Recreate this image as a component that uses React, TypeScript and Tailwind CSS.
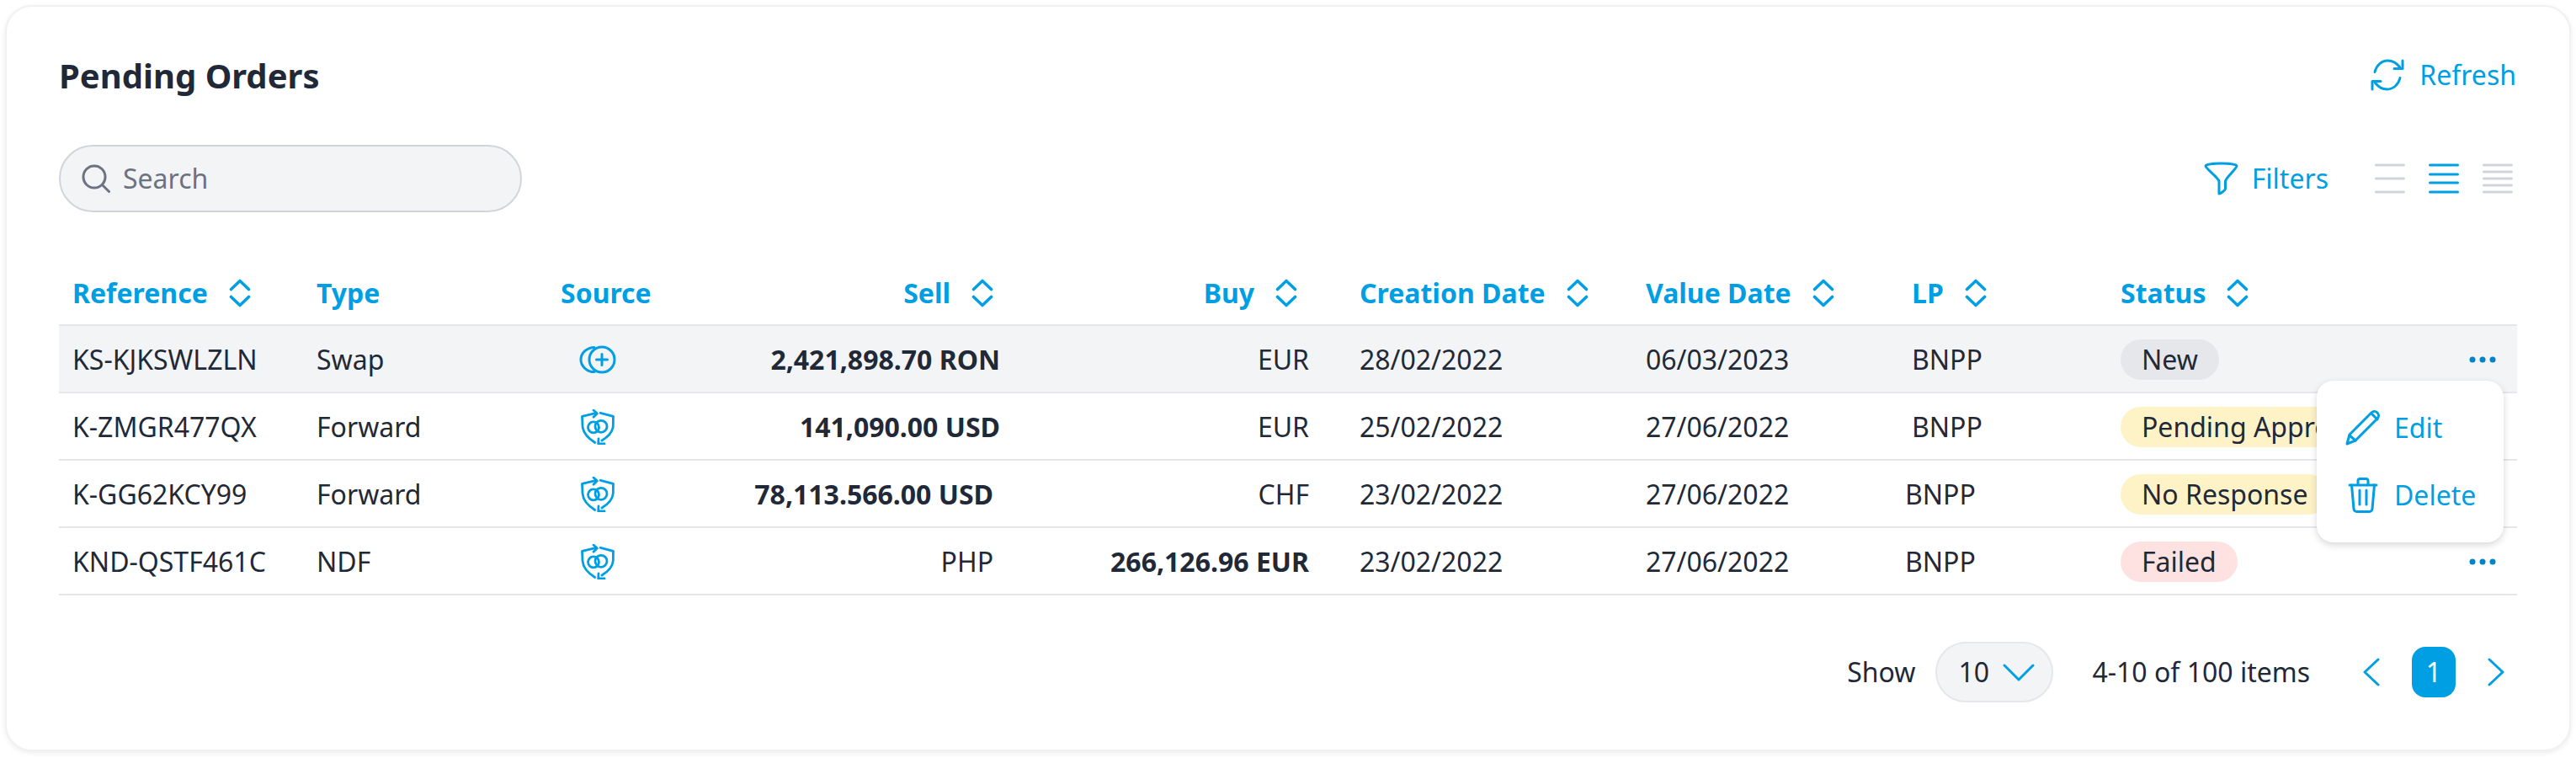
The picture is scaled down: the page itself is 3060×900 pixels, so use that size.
import { type ReactNode } from "react";

const rowGrid =
  "grid grid-cols-[290px_290px_120px_434px_367px_368px_316px_248px_487px] items-center";

function SortIcon() {
  return (
    <svg width="26" height="34" viewBox="0 0 26 34" fill="none" stroke="#009fe3" strokeWidth="3.6" strokeLinecap="round" strokeLinejoin="round">
      <path d="M2.5 12.5 13 2.5l10.500 10" />
      <path d="M2.5 21.5 13 31.5l10.500-10" />
    </svg>
  );
}

function CoinsPlusIcon() {
  return (
    <svg width="44" height="34" viewBox="0 0 44 34" fill="none" stroke="#009fe3" strokeWidth="3" strokeLinecap="round">
      <path d="M18 2.400C9.500 2.400 2 9 2 17s7.500 14.600 16 14.600" />
      <circle cx="27" cy="17" r="15" />
      <path d="M27 10.500v13M20.500 17h13" />
    </svg>
  );
}

function ShieldCycleIcon() {
  return (
    <svg width="40" height="42" viewBox="0 0 40 42" fill="none" stroke="#009fe3" strokeWidth="2.800" strokeLinecap="round" strokeLinejoin="round">
      <path d="M18.300 4.300 1.500 8.300 2 20c.5 7 6 14 14.700 19.500" />
      <path d="M15 1l4.300 4L15 9.300" />
      <path d="M23.300 4.300 38.500 8.300 38.300 20c-.5 6-5 12-13.300 17" />
      <path d="M21 35l-.3 6H28" />
      <circle cx="15" cy="21.300" r="6.500" />
      <circle cx="24" cy="20.300" r="7" />
    </svg>
  );
}

function Dots() {
  return (
    <svg width="32" height="8" viewBox="0 0 32 8" fill="#0284c7">
      <circle cx="4" cy="4" r="3.500" />
      <circle cx="16" cy="4" r="3.500" />
      <circle cx="28" cy="4" r="3.500" />
    </svg>
  );
}

function Pill({ color, children }: { color: string; children: ReactNode }) {
  return (
    <span className={`inline-flex h-12 items-center rounded-full px-[25px] whitespace-nowrap ${color}`}>
      {children}
    </span>
  );
}

function Head({ children, className = "" }: { children: ReactNode; className?: string }) {
  return (
    <div className={`flex items-center gap-[25px] ${className}`}>
      <span>{children}</span>
      <SortIcon />
    </div>
  );
}

const orders = [
  {
    ref: "KS-KJKSWLZLN",
    type: "Swap",
    icon: <CoinsPlusIcon />,
    sell: "2,421,898.70 RON",
    sellBold: true,
    buy: "EUR",
    buyBold: false,
    created: "28/02/2022",
    value: "06/03/2023",
    pill: <Pill color="bg-[#e5e7eb]">New</Pill>,
    bg: "bg-[#f3f4f6]",
    sellPad: "pr-[16px]",
    lpPad: "pl-[16px]",
  },
  {
    ref: "K-ZMGR477QX",
    type: "Forward",
    icon: <ShieldCycleIcon />,
    sell: "141,090.00 USD",
    sellBold: true,
    buy: "EUR",
    buyBold: false,
    created: "25/02/2022",
    value: "27/06/2022",
    pill: <Pill color="bg-[#fef3c7]">Pending Approval</Pill>,
    bg: "",
    sellPad: "pr-[16px]",
    lpPad: "pl-[16px]",
  },
  {
    ref: "K-GG62KCY99",
    type: "Forward",
    icon: <ShieldCycleIcon />,
    sell: "78,113.566.00 USD",
    sellBold: true,
    buy: "CHF",
    buyBold: false,
    created: "23/02/2022",
    value: "27/06/2022",
    pill: <Pill color="bg-[#fef3c7]">No Response</Pill>,
    bg: "",
    sellPad: "pr-[24px]",
    lpPad: "pl-[8px]",
  },
  {
    ref: "KND-QSTF461C",
    type: "NDF",
    icon: <ShieldCycleIcon />,
    sell: "PHP",
    sellBold: false,
    buy: "266,126.96 EUR",
    buyBold: true,
    created: "23/02/2022",
    value: "27/06/2022",
    pill: <Pill color="bg-[#fee2e2]">Failed</Pill>,
    bg: "",
    sellPad: "pr-[24px]",
    lpPad: "pl-[8px]",
  },
];

export default function App() {
  return (
    <div className="p-[6px] font-['Noto_Sans',sans-serif] text-[#1f2937] text-[32px] leading-[40px]">
      <div className="h-[886px] rounded-[32px] bg-white border-2 border-[#f0f1f3] shadow-[0_2px_6px_rgba(0,0,0,0.08)] px-[62px] pt-[54px]">
        {/* Title row */}
        <div className="flex items-center justify-between h-[56px]">
          <h1 className="text-[40px] font-bold">Pending Orders</h1>
          <button className="flex items-center gap-[18px] text-[#009fe3] pr-[1px] -mt-[3px]">
            <svg width="40" height="38" viewBox="0 0 40 38" fill="none" stroke="#009fe3" strokeWidth="3" strokeLinecap="round" strokeLinejoin="round">
              <path d="M5 15.500C7 7.500 13 2 20.500 2c5.500 0 10 2.500 14 7.500" />
              <path d="M38 2v9.500H28" />
              <path d="M35 22.500C33 30.500 27 36 19.500 36c-5.500 0-10-2.500-14-7.500" />
              <path d="M2 36v-9.500h10" />
            </svg>
            Refresh
          </button>
        </div>

        {/* Toolbar */}
        <div className="flex items-center justify-between mt-[54px] h-[80px]">
          <div className="flex items-center gap-[15px] w-[550px] h-[80px] rounded-full bg-[#f3f4f6] border-2 border-[#d1d5db] pl-[25px] text-[#6b7280]">
            <svg width="34" height="34" viewBox="0 0 34 34" fill="none" stroke="#6b7280" strokeWidth="3" strokeLinecap="round">
              <circle cx="15" cy="15" r="13" />
              <path d="m24.500 24.500 8 8" />
            </svg>
            Search
          </div>
          <div className="flex items-center pr-[5px]">
            <button className="flex items-center gap-[16px] text-[#009fe3]">
              <svg width="41" height="40" viewBox="0 0 41 40" fill="none" stroke="#009fe3" strokeWidth="3" strokeLinecap="round" strokeLinejoin="round">
                <path d="M2 5c0-2 9-3 18.500-3S39 3 39 5c0 3-12 13-13.500 18v9c0 2-6 6-7.500 6V23C16 18 2 8 2 5Z" />
              </svg>
              Filters
            </button>
            <div className="flex items-center gap-[28px] ml-[55px]">
              <svg width="36" height="36" viewBox="0 0 36 36" stroke="#d1d5db" strokeWidth="3" strokeLinecap="round">
                <path d="M1.500 2h33M1.500 18h33M1.500 34h33" />
              </svg>
              <svg width="36" height="36" viewBox="0 0 36 36" stroke="#009fe3" strokeWidth="3" strokeLinecap="round">
                <path d="M1.500 2h33M1.500 13h33M1.500 23h33M1.500 34h33" />
              </svg>
              <svg width="36" height="36" viewBox="0 0 36 36" stroke="#d1d5db" strokeWidth="3" strokeLinecap="round">
                <path d="M1.500 2h33M1.500 10h33M1.500 18h33M1.500 26h33M1.500 34h33" />
              </svg>
            </div>
          </div>
        </div>

        {/* Table */}
        <div className="relative mt-[58px] w-[2920px]">
          <div className={`${rowGrid} h-[77px] border-b-2 border-[#e5e7eb] font-bold text-[#009fe3]`}>
            <Head className="pl-[16px]">Reference</Head>
            <div className="pl-[16px]">Type</div>
            <div className="text-center pl-[16px] whitespace-nowrap">Source</div>
            <Head className="justify-end pr-[24px]">Sell</Head>
            <Head className="justify-end pr-[30px]">Buy</Head>
            <Head className="pl-[44px]">Creation Date</Head>
            <Head className="pl-[16px]">Value Date</Head>
            <Head className="pl-[16px]">LP</Head>
            <Head className="pl-[16px]">Status</Head>
          </div>
          {orders.map((o) => (
            <div key={o.ref} className={`${rowGrid} h-[80px] pt-[2px] border-b-2 border-[#e5e7eb] ${o.bg}`}>
              <div className="pl-[16px]">{o.ref}</div>
              <div className="pl-[16px]">{o.type}</div>
              <div className="flex justify-center">{o.icon}</div>
              <div className={`text-right ${o.sellPad} ${o.sellBold ? "font-bold" : ""}`}>{o.sell}</div>
              <div className={`text-right pr-[16px] ${o.buyBold ? "font-bold" : ""}`}>{o.buy}</div>
              <div className="pl-[44px]">{o.created}</div>
              <div className="pl-[16px]">{o.value}</div>
              <div className={o.lpPad}>BNPP</div>
              <div className="flex items-center justify-between pl-[16px] pr-[25px]">
                {o.pill}
                <Dots />
              </div>
            </div>
          ))}

          {/* Row action menu */}
          <div className="absolute left-[2682px] top-[142px] w-[222px] h-[192px] rounded-[20px] bg-white shadow-[0_3px_8px_rgba(0,0,0,0.16)] text-[#009fe3] pt-[16px] pl-[34px]">
            <div className="flex items-center gap-[16px] h-[80px]">
              <svg width="42" height="42" viewBox="0 0 42 42" fill="none" stroke="#009fe3" strokeWidth="3" strokeLinecap="round" strokeLinejoin="round">
                <path d="M2 40 5 29 31 3c2-2 5-2 7 0s2 5 0 7L12 36 2 40Z" />
                <path d="m31 4 7 7M5 30l7 6" />
              </svg>
              Edit
            </div>
            <div className="flex items-center gap-[19px] h-[80px] pl-[3px]">
              <svg width="36" height="42" viewBox="0 0 36 42" fill="none" stroke="#009fe3" strokeWidth="3" strokeLinecap="round" strokeLinejoin="round">
                <path d="M2 9h32" />
                <path d="M12 8V4c0-1.500 1-2.500 2.500-2.500h7C23 1.500 24 2.500 24 4v4" />
                <path d="M4.500 9 7 37c0 2 1.500 3.500 3.500 3.500h15c2 0 3.500-1.500 3.500-3.500l2.500-28" />
                <path d="M14 15v17M22 15v17" />
              </svg>
              Delete
            </div>
          </div>
        </div>

        {/* Pagination */}
        <div className="flex items-center justify-end mt-[55px] w-[2905px] h-[72px]">
          <span>Show</span>
          <div className="flex items-center gap-[16px] w-[140px] h-[72px] ml-[24px] pl-[25px] rounded-full bg-[#f3f4f6] border-2 border-[#e5e7eb]">
            <span>10</span>
            <svg width="38" height="22" viewBox="0 0 38 22" fill="none" stroke="#009fe3" strokeWidth="3" strokeLinecap="round" strokeLinejoin="round">
              <path d="m2 3 17 17L36 3" />
            </svg>
          </div>
          <span className="ml-[46px]">4-10 of 100 items</span>
          <svg className="ml-[63px]" width="20" height="34" viewBox="0 0 20 34" fill="none" stroke="#009fe3" strokeWidth="3" strokeLinecap="round" strokeLinejoin="round">
            <path d="M18 2 2 17l16 15" />
          </svg>
          <span className="flex items-center justify-center ml-[38px] w-[52px] h-[60px] rounded-[16px] bg-[#009fe3] text-white">1</span>
          <svg className="ml-[38px]" width="20" height="34" viewBox="0 0 20 34" fill="none" stroke="#009fe3" strokeWidth="3" strokeLinecap="round" strokeLinejoin="round">
            <path d="m2 2 16 15L2 32" />
          </svg>
        </div>
      </div>
    </div>
  );
}
